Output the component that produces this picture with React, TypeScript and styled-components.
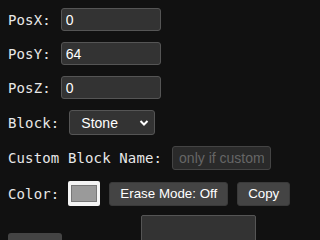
import styled, { createGlobalStyle } from 'styled-components';

const GlobalStyle = createGlobalStyle`
  html, body {
    margin: 0;
    background: #111111;
    overflow: hidden;
  }
`;

const Panel = styled.div`
  display: flex;
  flex-direction: column;
  gap: 11px;
  padding: 8px;
  color: #e6e6e6;
  font-family: 'DejaVu Sans Mono', monospace;
  font-size: 14px;
`;

const Row = styled.div<{ $gap?: number }>`
  display: flex;
  align-items: center;
  gap: ${(p) => p.$gap ?? 10}px;
`;

const Label = styled.label`
  white-space: nowrap;
  letter-spacing: 0.13px;
  color: #e8e8e8;
`;

const TextInput = styled.input<{ $width?: number }>`
  box-sizing: border-box;
  width: ${(p) => p.$width ?? 100}px;
  height: 23px;
  padding: 0 4px;
  background: #333333;
  border: 1px solid #555555;
  border-radius: 3px;
  color: #ffffff;
  font-family: 'Liberation Sans', Arial, sans-serif;
  font-size: 14px;
  outline: none;

  &::placeholder {
    color: #666666;
  }
`;

const DimInput = styled(TextInput)`
  height: 24px;
  padding: 0 6px;
  background: #2a2a2a;
  border-color: #444444;
`;

const SelectWrap = styled.div`
  position: relative;
  display: flex;
  width: 86px;
  height: 25px;
`;

const Select = styled.select`
  appearance: none;
  box-sizing: border-box;
  width: 100%;
  height: 100%;
  padding: 0 0 0 11px;
  background: #333333;
  border: 1px solid #555555;
  border-radius: 3px;
  color: #ffffff;
  font-family: 'Liberation Sans', Arial, sans-serif;
  font-size: 14px;
`;

const Chevron = styled.svg`
  position: absolute;
  right: 6px;
  top: 9px;
  pointer-events: none;
`;

const Swatch = styled.div`
  box-sizing: border-box;
  width: 32px;
  height: 25px;
  padding: 4px 3px;
  background: #f4f4f4;
  border-radius: 2px;
`;

const SwatchFill = styled.div<{ $color: string }>`
  height: 100%;
  background: ${(p) => p.$color};
  border: 1px solid #777777;
  box-sizing: border-box;
`;

const Button = styled.button`
  height: 24px;
  padding: 0 10px;
  background: #444444;
  border: 1px solid #3a3a3a;
  border-radius: 3px;
  color: #ffffff;
  font-family: 'Liberation Sans', Arial, sans-serif;
  font-size: 13.33px;
`;

const Footer = styled.div`
  display: flex;
  align-items: flex-start;
  gap: 79px;
  margin-top: -2px;
`;

const SmallButton = styled.div`
  margin-top: 18px;
  width: 54px;
  height: 20px;
  background: #444444;
  border-radius: 3px 3px 0 0;
`;

const Canvas = styled.div`
  box-sizing: border-box;
  width: 115px;
  height: 40px;
  background: #333333;
  border: 1px solid #555555;
  border-radius: 2px;
`;

export default function App() {
  return (
    <>
      <GlobalStyle />
      <Panel>
        <Row>
          <Label>PosX:</Label>
          <TextInput defaultValue="0" />
        </Row>
        <Row>
          <Label>PosY:</Label>
          <TextInput defaultValue="64" />
        </Row>
        <Row>
          <Label>PosZ:</Label>
          <TextInput defaultValue="0" />
        </Row>
        <Row>
          <Label>Block:</Label>
          <SelectWrap>
            <Select defaultValue="stone">
              <option value="stone">Stone</option>
              <option value="dirt">Dirt</option>
              <option value="grass">Grass</option>
            </Select>
            <Chevron width="10" height="8" viewBox="0 0 10 8">
              <path d="M1.5 2 L5 5.5 L8.5 2" fill="none" stroke="#ffffff" strokeWidth="2" />
            </Chevron>
          </SelectWrap>
        </Row>
        <Row>
          <Label>Custom Block Name:</Label>
          <DimInput $width={99} placeholder="only if custom" />
        </Row>
        <Row $gap={9}>
          <Label>Color:</Label>
          <Swatch>
            <SwatchFill $color="#9a9a9a" />
          </Swatch>
          <Button>Erase Mode: Off</Button>
          <Button>Copy</Button>
        </Row>
        <Footer>
          <SmallButton />
          <Canvas />
        </Footer>
      </Panel>
    </>
  );
}
